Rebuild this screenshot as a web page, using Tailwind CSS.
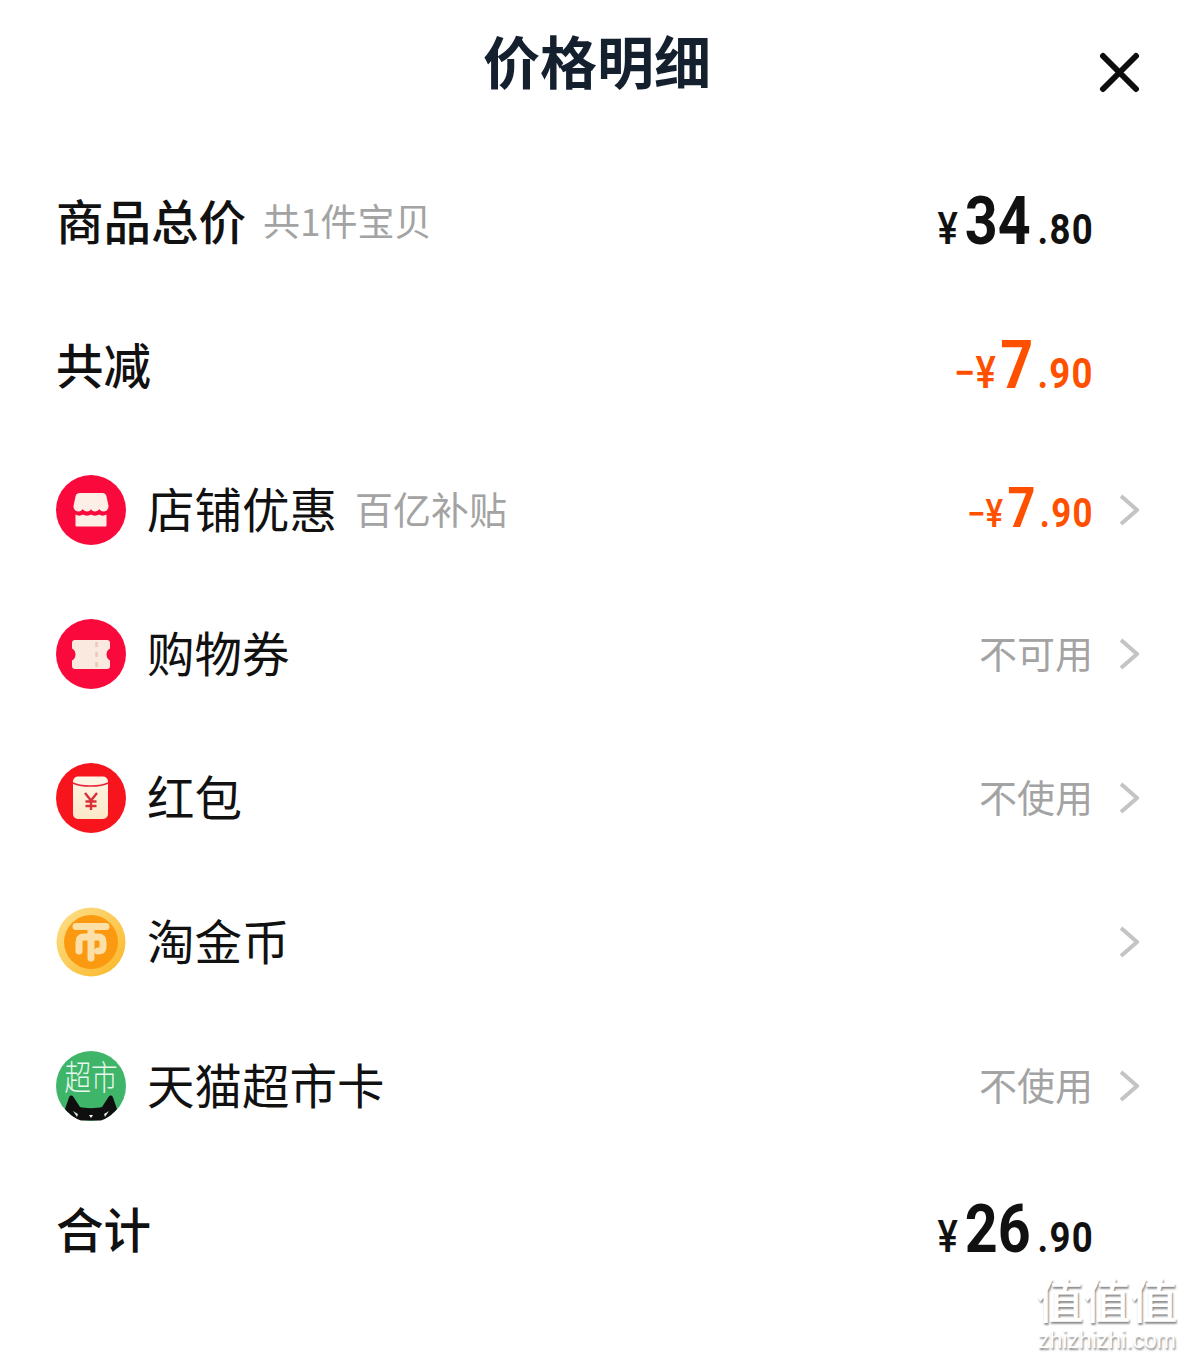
<!DOCTYPE html>
<html lang="zh-CN">
<head>
    <meta charset="UTF-8">
    <meta name="viewport" content="width=device-width, initial-scale=1.0">
    <title>价格明细</title>
    <script src="https://cdn.jsdelivr.net/npm/@tailwindcss/browser@4"></script>
</head>
<body class="bg-white font-['Noto_Sans_CJK_SC','Noto_Sans',sans-serif] text-[#111111]">
<div class="relative w-[1186px] h-[1355px] overflow-hidden bg-white">

    <!-- 标题 -->
    <header class="relative h-[152px]">
        <h1 class="pt-[18px] pl-[8px] text-center text-[57px] leading-[82px] font-bold text-[#15202f]">价格明细</h1>
        <button class="absolute left-[1099px] top-[52px] w-[41px] h-[41px]">
            <svg viewBox="0 0 41 41" class="w-full h-full"><path d="M4 4L37 37M37 4L4 37" stroke="#0d0d0d" stroke-width="6" stroke-linecap="round" fill="none"/></svg>
        </button>
    </header>

    <!-- 汇总 -->
    <section class="pl-[56px] pr-[92px]">
        <div class="h-[144px] flex items-center justify-between">
            <div class="flex items-center pb-[8px]">
                <span class="text-[47.5px] leading-none font-medium">商品总价</span>
                <span class="ml-[17px] text-[37px] leading-none text-[#a3a3a3]">共1件宝贝</span>
            </div>
            <div class="flex items-baseline origin-right scale-x-[0.87] pb-[4px] font-['Roboto',sans-serif] font-bold tracking-[1.5px]">
                <span class="mr-[8px] text-[44px] leading-none font-medium tracking-normal">¥</span><span class="text-[66px] leading-none tracking-normal">34</span><span class="ml-[8px] text-[42px] leading-none">.80</span>
            </div>
        </div>
        <div class="h-[144px] flex items-center justify-between">
            <span class="pb-[8px] text-[47.5px] leading-none font-medium">共减</span>
            <div class="flex items-baseline origin-right scale-x-[0.87] pb-[4px] text-[#ff5000] font-['Roboto',sans-serif] font-bold tracking-[1.5px]">
                <span class="mr-[5px] text-[44px] leading-none font-medium tracking-normal">−¥</span><span class="text-[66px] leading-none tracking-normal">7</span><span class="ml-[5px] text-[42px] leading-none">.90</span>
            </div>
        </div>
    </section>

    <!-- 优惠项 -->
    <section class="pl-[56px] pr-[47px] -mt-[2px]">
        <div class="h-[144px] flex items-center">
            <svg viewBox="0 0 70 70" class="w-[70px] h-[70px] shrink-0">
                <circle cx="35" cy="35" r="35" fill="#fa0a3c"/>
                <path d="M24 18H46C49 18 50 19.500 50.500 21.500L52.500 31C52.500 35 50 36.500 47.500 36.500C45.500 36.500 44 35.500 43.500 34C42.500 35.500 40.500 36.500 39 36.500C37 36.500 35.500 35.500 35 34C34.500 35.500 33 36.500 31 36.500C29.500 36.500 27.500 35.500 26.500 34C26 35.500 24.500 36.500 22.500 36.500C20 36.500 17.500 35 17.500 31L19.500 21.500C20 19.500 21 18 24 18Z" fill="#fdeee6"/>
                <path d="M19.500 39.500C22 41 25 41 27 39.500C29 41 33 41 35 39.500C37 41 41 41 43 39.500C45 41 48 41 50.500 39.500V50.500C50.500 51 50 51.500 49.500 51.500H20.500C20 51.500 19.500 51 19.500 50.500Z" fill="#fdeee6"/>
            </svg>
            <span class="ml-[21px] pb-[5px] text-[47.5px] leading-none">店铺优惠</span>
            <span class="ml-[18px] pb-[5px] text-[38px] leading-none text-[#a3a3a3]">百亿补贴</span>
            <div class="ml-auto flex items-baseline origin-right scale-x-[0.87] pb-[4px] text-[#ff5000] font-['Roboto',sans-serif] font-bold tracking-[1.5px]">
                <span class="mr-[5px] text-[38px] leading-none font-medium tracking-normal">−¥</span><span class="text-[56px] leading-none tracking-normal">7</span><span class="ml-[5px] text-[40px] leading-none">.90</span>
            </div>
            <svg viewBox="0 0 20 32" class="ml-[25px] w-[20px] h-[32px]"><path d="M2 2L18 16L2 30" stroke="#c4c4c4" stroke-width="4" fill="none"/></svg>
        </div>
        <div class="h-[144px] flex items-center">
            <svg viewBox="0 0 70 70" class="w-[70px] h-[70px] shrink-0">
                <circle cx="35" cy="35" r="35" fill="#fa0a3c"/>
                <path d="M19 21H51C53 21 54 22 54 24V29.500C52 30.500 50.500 32.500 50.500 35.500C50.500 38.500 52 40.500 54 41.500V47C54 49 53 50 51 50H19C17 50 16 49 16 47V41.500C18 40.500 19.500 38.500 19.500 35.500C19.500 32.500 18 30.500 16 29.500V24C16 22 17 21 19 21Z" fill="#f9e9df"/>
                <path d="M40.500 23V49" stroke="#eec6b8" stroke-width="2.500" stroke-dasharray="5 5"/>
            </svg>
            <span class="ml-[21px] pb-[5px] text-[47.5px] leading-none">购物券</span>
            <span class="ml-auto pb-[5px] text-[38px] leading-none text-[#a3a3a3]">不可用</span>
            <svg viewBox="0 0 20 32" class="ml-[26px] w-[20px] h-[32px]"><path d="M2 2L18 16L2 30" stroke="#c4c4c4" stroke-width="4" fill="none"/></svg>
        </div>
        <div class="h-[144px] flex items-center">
            <svg viewBox="0 0 70 70" class="w-[70px] h-[70px] shrink-0">
                <defs><linearGradient id="bao" x1="0" y1="0" x2="0" y2="1"><stop offset="0" stop-color="#fff6e8"/><stop offset="1" stop-color="#fbe8c6"/></linearGradient></defs>
                <circle cx="35" cy="35" r="35" fill="#f8141c"/>
                <rect x="17" y="13.500" width="35" height="42.500" rx="5" fill="url(#bao)"/>
                <path d="M17 20C24 24 45 24 52 20" stroke="#e8243a" stroke-width="1.500" fill="none"/>
                <path d="M29 30L35 37.500L41 30M35 37.500V47M29.500 38.500H40.500M29.500 43H40.500" stroke="#d92f3a" stroke-width="2.400" fill="none"/>
            </svg>
            <span class="ml-[21px] pb-[5px] text-[47.5px] leading-none">红包</span>
            <span class="ml-auto pb-[5px] text-[38px] leading-none text-[#a3a3a3]">不使用</span>
            <svg viewBox="0 0 20 32" class="ml-[26px] w-[20px] h-[32px]"><path d="M2 2L18 16L2 30" stroke="#c4c4c4" stroke-width="4" fill="none"/></svg>
        </div>
        <div class="h-[144px] flex items-center">
            <svg viewBox="0 0 70 70" class="w-[70px] h-[70px] shrink-0">
                <defs><linearGradient id="bi" x1="0" y1="0" x2="1" y2="1"><stop offset="0" stop-color="#fde08c"/><stop offset="1" stop-color="#fbb626"/></linearGradient></defs>
                <circle cx="35" cy="35" r="34.500" fill="url(#bi)"/>
                <circle cx="35" cy="35" r="27" fill="#fb9a10"/>
                <path d="M20 19.500H50M35 20V51M23 44V35C23 31 25 30 28 30H42C45 30 47 31 47 35V40C47 43 45 44 42 44" stroke="#fde0a8" stroke-width="7" stroke-linecap="round" stroke-linejoin="round" fill="none"/>
            </svg>
            <span class="ml-[21px] pb-[5px] text-[47.5px] leading-none">淘金币</span>
            <svg viewBox="0 0 20 32" class="ml-auto w-[20px] h-[32px]"><path d="M2 2L18 16L2 30" stroke="#c4c4c4" stroke-width="4" fill="none"/></svg>
        </div>
        <div class="h-[144px] flex items-center">
            <svg viewBox="0 0 70 70" class="w-[70px] h-[70px] shrink-0">
                <circle cx="35" cy="35" r="35" fill="#3fb56a"/>
                <text transform="translate(35 39) scale(0.78 1)" text-anchor="middle" font-size="34" fill="#e9f8ee" font-family="Noto Sans CJK SC" font-weight="300">超市</text>
                <path d="M9 58L13 46.500C14 44 16 44 17.500 46L24 56C28 57.500 42 57.500 46 56L52.500 46C54 44 56 44 57 46.500L61 58C56 64 50 68 45 69.500H25C20 68 14 64 9 58Z" fill="#0f0f0f"/>
                <path d="M17 60L22 63L21 66ZM53 60L48 63L49 66Z" fill="#d8e8dc"/>
                <path d="M33 64H37L35 67Z" fill="#ffffff"/>
            </svg>
            <span class="ml-[21px] pb-[5px] text-[47.5px] leading-none">天猫超市卡</span>
            <span class="ml-auto pb-[5px] text-[38px] leading-none text-[#a3a3a3]">不使用</span>
            <svg viewBox="0 0 20 32" class="ml-[26px] w-[20px] h-[32px]"><path d="M2 2L18 16L2 30" stroke="#c4c4c4" stroke-width="4" fill="none"/></svg>
        </div>
    </section>

    <!-- 合计 -->
    <section class="pl-[56px] pr-[92px] h-[144px] flex items-center justify-between mt-[2px]">
        <span class="pb-[8px] text-[47.5px] leading-none font-medium">合计</span>
        <div class="flex items-baseline origin-right scale-x-[0.87] pb-[4px] font-['Roboto',sans-serif] font-bold tracking-[1.5px]">
            <span class="mr-[8px] text-[44px] leading-none font-medium tracking-normal">¥</span><span class="text-[66px] leading-none tracking-normal">26</span><span class="ml-[8px] text-[42px] leading-none">.90</span>
        </div>
    </section>

    <!-- 水印 -->
    <div class="absolute left-[1028px] top-[1268px] w-[158px] text-center text-white [text-shadow:1px_2px_2px_#8a8a8a]">
        <div class="text-[47px] leading-[60px] font-medium">值值值</div>
        <div class="text-[23px] leading-[24px] whitespace-nowrap font-['Liberation_Sans',sans-serif]">zhizhizhi.com</div>
    </div>
</div>
</body>
</html>
